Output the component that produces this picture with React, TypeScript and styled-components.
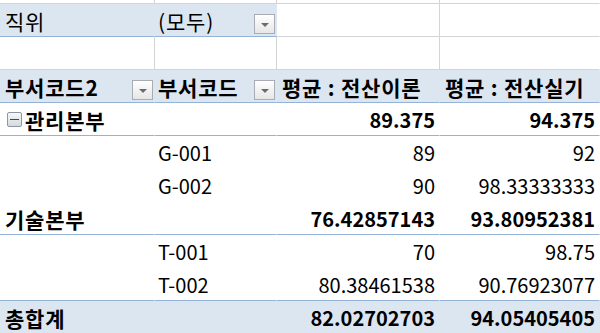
import React from 'react';
import styled, { createGlobalStyle } from 'styled-components';

const GlobalStyle = createGlobalStyle`
  html, body {
    margin: 0;
    padding: 0;
    background: #fff;
    overflow: hidden;
  }
  body {
    font-family: "Noto Sans CJK KR", "Noto Sans", sans-serif;
  }
`;

const Sheet = styled.div`
  display: grid;
  grid-template-columns: 155px 122px 163px 160px;
  grid-template-rows: 4px;
  grid-auto-rows: 33px;
  width: 600px;
  height: 333px;
  overflow: hidden;
  font-size: 20px;
  color: #000;
`;

type Line = 'grid' | 'blue' | 'none';

interface CellProps {
  $fill?: boolean;
  $bold?: boolean;
  $right?: boolean;
  $line?: Line;
  $vline?: boolean;
  $indent?: number;
}

const lineColor = (l?: Line) =>
  l === 'blue' ? '#95b3d7' : l === 'grid' ? '#d4d4d4' : 'transparent';

const Cell = styled.div<CellProps>`
  box-sizing: border-box;
  display: flex;
  align-items: center;
  justify-content: ${p => (p.$right ? 'flex-end' : 'space-between')};
  padding: 1px ${p => (p.$right ? 4 : 0)}px 0 ${p => p.$indent ?? 5}px;
  background: ${p => (p.$fill ? '#dce6f1' : '#fff')};
  font-weight: ${p => (p.$bold ? 700 : 400)};
  border-bottom: 1px solid ${p => lineColor(p.$line)};
  border-right: 1px solid ${p => (p.$vline ? '#d4d4d4' : 'transparent')};
  white-space: nowrap;
  overflow: hidden;
`;

const Spacer = styled.div<{ $vline?: boolean }>`
  border-bottom: 1px solid #d4d4d4;
  border-right: 1px solid ${p => (p.$vline ? '#d4d4d4' : 'transparent')};
  box-sizing: border-box;
`;

// Korean labels: Malgun-like glyphs run a little larger than Noto's
const Label = styled.span`
  display: flex;
  align-items: center;
  font-size: 21px;
  letter-spacing: 0.8px;
  white-space: pre;
`;

const DropButton = styled.span`
  box-sizing: border-box;
  align-self: flex-end;
  flex: none;
  width: 21px;
  height: 20px;
  margin: 0 1px 2px 0;
  border: 1px solid #a9adb3;
  background: linear-gradient(#ffffff, #e6e6e6);
  display: flex;
  align-items: center;
  justify-content: center;
  &::after {
    content: '';
    margin-top: 2px;
    border-left: 4px solid transparent;
    border-right: 4px solid transparent;
    border-top: 4px solid #6b6b6b;
  }
`;

const Collapse = styled.span`
  box-sizing: border-box;
  flex: none;
  width: 15px;
  height: 15px;
  margin: 0 3px 0 2px;
  border: 1px solid #8e979f;
  border-radius: 2px;
  background: linear-gradient(#f7f8f9, #d5d9dd);
  display: flex;
  align-items: center;
  justify-content: center;
  &::after {
    content: '';
    width: 9px;
    height: 1px;
    background: #3a4a5a;
  }
`;

type Row = {
  a: string;
  b: string;
  c: string;
  d: string;
  bold?: boolean;
  fill?: boolean;
  line?: Line;
  toggle?: boolean;
};

const rows: Row[] = [
  { a: '관리본부', b: '', c: '89.375', d: '94.375', bold: true, line: 'blue', toggle: true },
  { a: '', b: 'G-001', c: '89', d: '92' },
  { a: '', b: 'G-002', c: '90', d: '98.33333333' },
  { a: '기술본부', b: '', c: '76.42857143', d: '93.80952381', bold: true, line: 'blue' },
  { a: '', b: 'T-001', c: '70', d: '98.75' },
  { a: '', b: 'T-002', c: '80.38461538', d: '90.76923077', line: 'blue' },
  { a: '총합계', b: '', c: '82.02702703', d: '94.05405405', bold: true, fill: true },
];

export default function App() {
  return (
    <>
      <GlobalStyle />
      <Sheet>
        <Spacer $vline />
        <Spacer $vline />
        <Spacer $vline />
        <Spacer />

        <Cell $fill $line="blue">
          <Label>직위</Label>
        </Cell>
        <Cell $fill $line="blue" $indent={3}>
          <Label>(모두)</Label>
          <DropButton />
        </Cell>
        <Cell $line="grid" $vline />
        <Cell $line="grid" />

        <Cell $line="grid" $vline />
        <Cell $line="grid" $vline />
        <Cell $line="grid" $vline />
        <Cell $line="grid" />

        <Cell $fill $bold $line="blue">
          <Label>부서코드2</Label>
          <DropButton />
        </Cell>
        <Cell $fill $bold $line="blue" $indent={3}>
          <Label>부서코드</Label>
          <DropButton />
        </Cell>
        <Cell $fill $bold $line="blue">
          <Label>평균 : 전산이론</Label>
        </Cell>
        <Cell $fill $bold $line="blue">
          <Label>평균 : 전산실기</Label>
        </Cell>

        {rows.map((r, i) => (
          <React.Fragment key={i}>
            <Cell $fill={r.fill} $bold={r.bold} $line={r.line}>
              <Label>
                {r.toggle && <Collapse />}
                {r.a}
              </Label>
            </Cell>
            <Cell $fill={r.fill} $bold={r.bold} $line={r.line} $indent={3}>
              {r.b}
            </Cell>
            <Cell $fill={r.fill} $bold={r.bold} $line={r.line} $right>
              {r.c}
            </Cell>
            <Cell $fill={r.fill} $bold={r.bold} $line={r.line} $right>
              {r.d}
            </Cell>
          </React.Fragment>
        ))}
      </Sheet>
    </>
  );
}
